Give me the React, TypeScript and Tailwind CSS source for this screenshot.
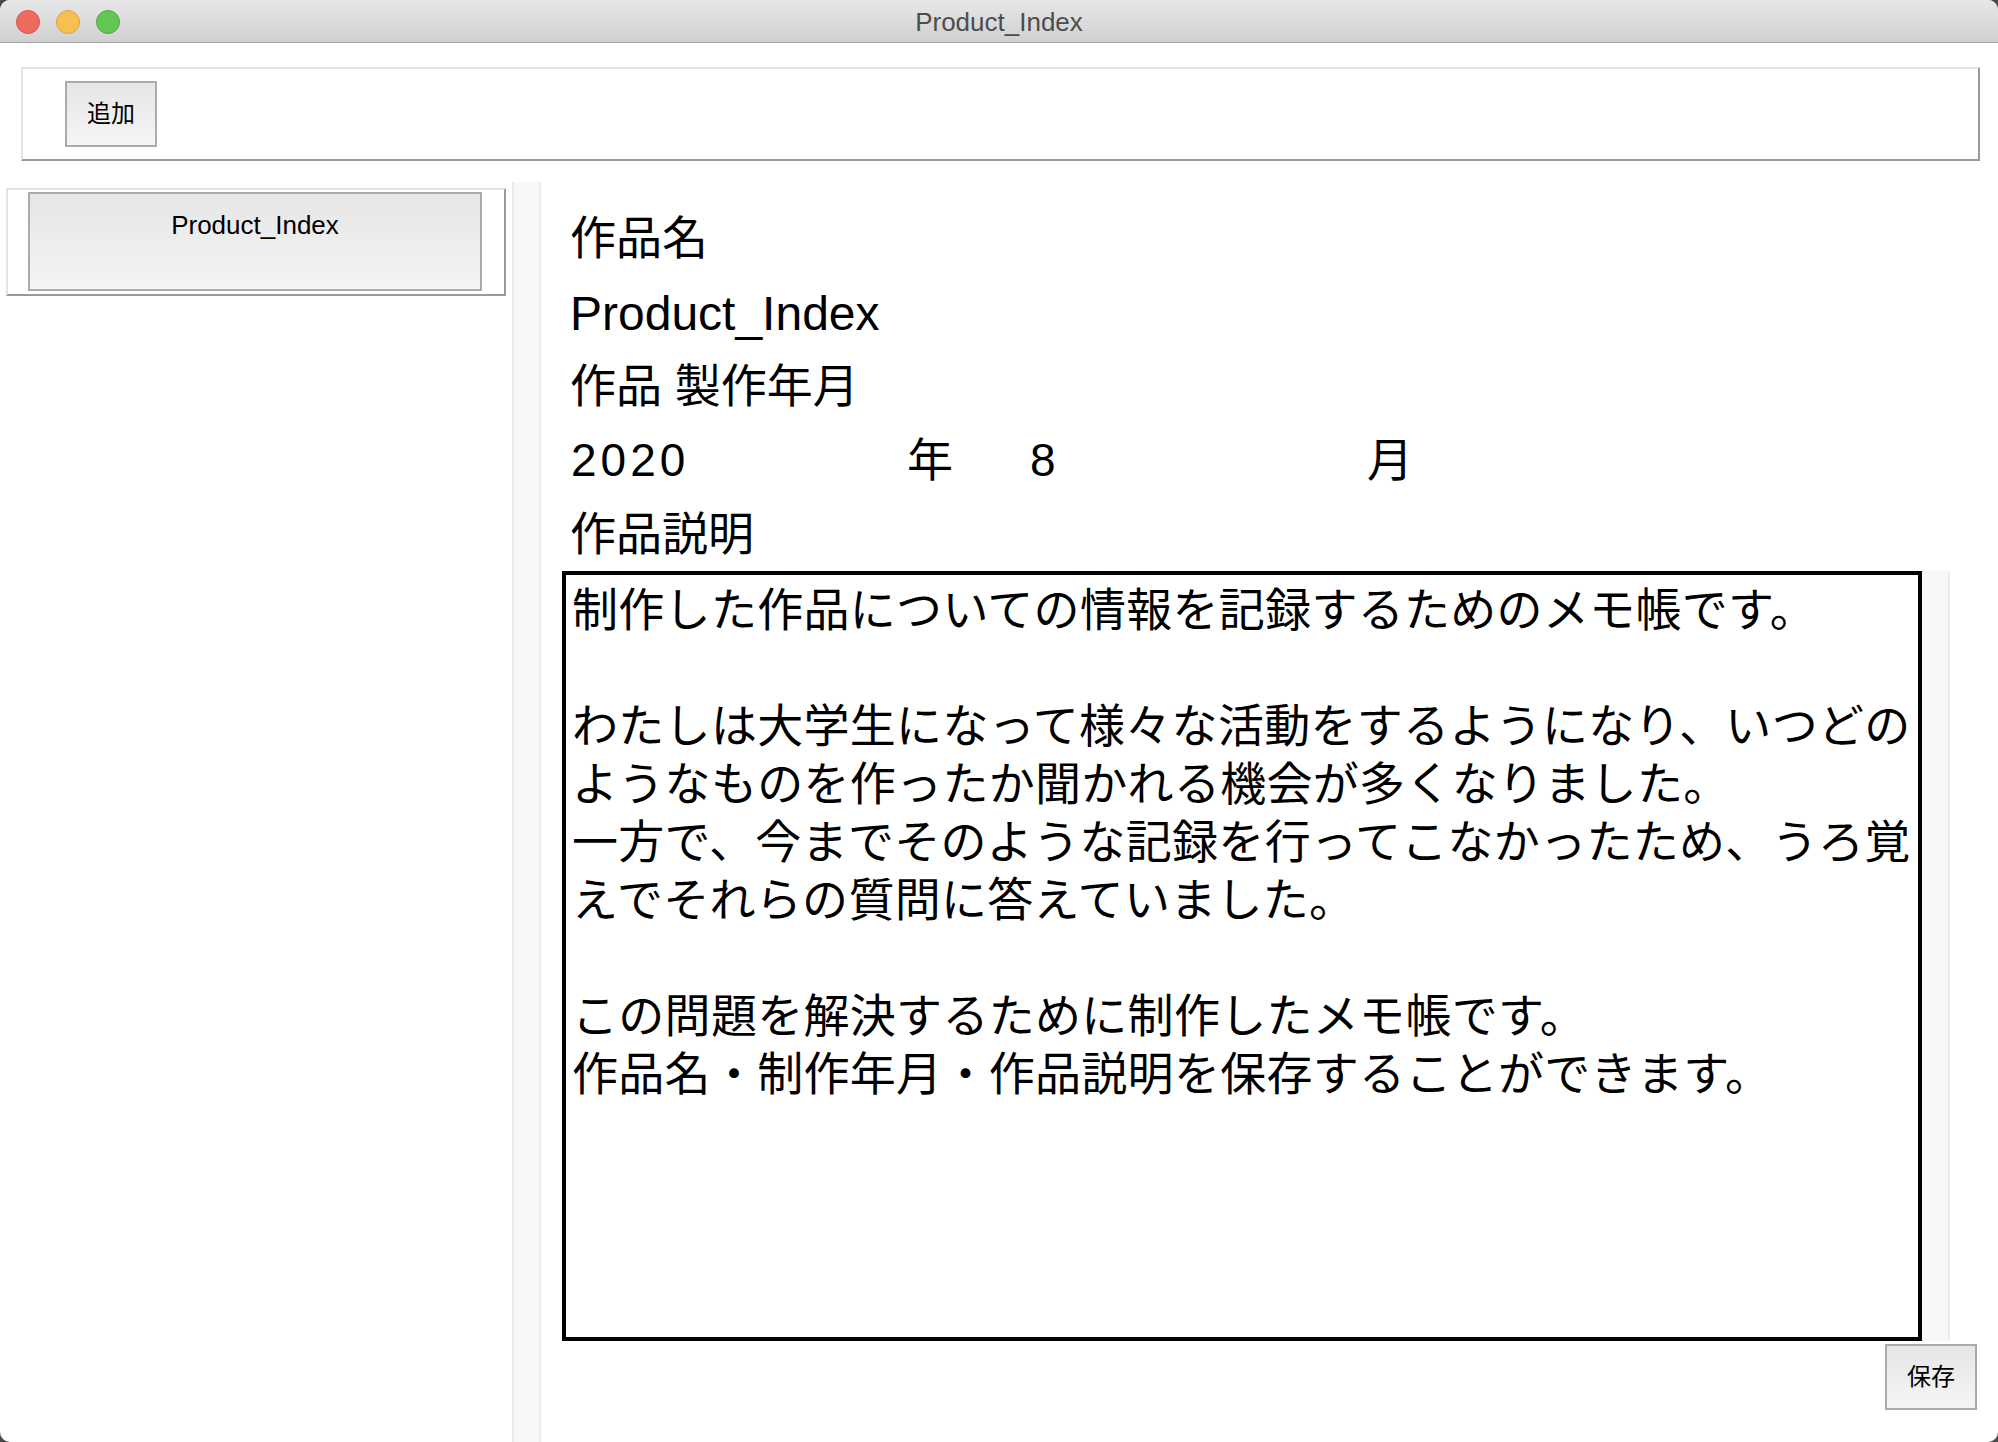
const Light = ({ color, ring }: { color: string; ring: string }) => (
  <div className={`h-[24px] w-[24px] rounded-full border ${color} ${ring}`} />
);

const MacButton = ({ label }: { label: string }) => (
  <button className="flex h-[66px] w-[92px] items-center justify-center border-2 border-[#ababab] bg-gradient-to-b from-[#e6e6e6] to-[#f5f5f5] text-[24px] text-black">
    {label}
  </button>
);

const memo = [
  "制作した作品についての情報を記録するためのメモ帳です。",
  "",
  "わたしは大学生になって様々な活動をするようになり、いつどの",
  "ようなものを作ったか聞かれる機会が多くなりました。",
  "一方で、今までそのような記録を行ってこなかったため、うろ覚",
  "えでそれらの質問に答えていました。",
  "",
  "この問題を解決するために制作したメモ帳です。",
  "作品名・制作年月・作品説明を保存することができます。",
];

export default function App() {
  return (
    <div className="h-[1442px] w-[1998px] bg-[#4a4a4a] font-['Liberation_Sans','Noto_Sans_CJK_JP',sans-serif] text-black">
      <div className="flex h-full flex-col overflow-hidden rounded-[10px] bg-white">
        {/* title bar */}
        <div className="relative flex h-[43px] shrink-0 items-center border-b border-[#a9a9a9] bg-gradient-to-b from-[#e7e7e7] to-[#d0d0d0]">
          <div className="flex gap-[16px] pl-[16px] pt-[1px]">
            <Light color="bg-[#ee6a5f]" ring="border-[#d5574c]" />
            <Light color="bg-[#f5c04f]" ring="border-[#d9a33f]" />
            <Light color="bg-[#62c655]" ring="border-[#4ea944]" />
          </div>
          <div className="absolute inset-0 flex items-center justify-center pt-[3px] text-[26px] text-[#4d4d4d]">
            Product_Index
          </div>
        </div>

        {/* toolbar */}
        <div className="shrink-0 pl-[21px] pr-[18px] pt-[24px]">
          <div className="flex h-[94px] items-center border-2 border-b-[#9a9a9a] border-l-[#e4e4e4] border-r-[#9a9a9a] border-t-[#e4e4e4] pl-[42px]">
            <MacButton label="追加" />
          </div>
        </div>

        {/* main */}
        <div className="flex flex-1 pt-[21px]">
          <div className="w-[512px] shrink-0 px-[6px] pt-[6px]">
            <div className="border-2 border-b-[#9a9a9a] border-l-[#e4e4e4] border-r-[#9a9a9a] border-t-[#e4e4e4] pb-[3px] pl-[20px] pr-[22px] pt-[2px]">
              <div className="h-[99px] border-2 border-[#ababab] bg-gradient-to-b from-[#e6e6e6] to-[#f4f4f4] pt-[16px] text-center text-[26px] leading-[30px]">
                Product_Index
              </div>
            </div>
          </div>

          <div className="w-[29px] shrink-0 border-l-2 border-r-2 border-[#ebebeb] bg-[#f8f8f8]" />

          <div className="flex flex-1 flex-col pl-[21px] pr-[21px] pt-[19px]">
            <div className="h-[74px] pl-[8px] text-[46px] leading-[74px]">作品名</div>
            <div className="h-[74px] pl-[8px] pt-[3px] text-[48px] leading-[71px]">Product_Index</div>
            <div className="h-[74px] pl-[8px] text-[46px] leading-[74px]">作品 製作年月</div>
            <div className="flex h-[74px] text-[46px] leading-[74px]">
              <span className="w-[345px] pl-[9px] tracking-[4px]">2020</span>
              <span className="w-[119px]">年</span>
              <span className="w-[341px] pl-[4px]">8</span>
              <span>月</span>
            </div>
            <div className="h-[74px] pl-[8px] text-[46px] leading-[74px]">作品説明</div>

            <div className="flex">
              <div className="h-[770px] w-[1360px] border-4 border-black px-[6px] pt-[2px] font-['Noto_Sans_CJK_JP',sans-serif] text-[46px] leading-[58px] tracking-[0.3px]">
                {memo.map((line, i) => (
                  <div key={i} className="h-[58px] whitespace-nowrap">
                    {line}
                  </div>
                ))}
              </div>
              <div className="h-[770px] w-[28px] border-r-2 border-[#ececec] bg-[#f7f7f7]" />
            </div>

            <div className="flex justify-end pt-[3px]">
              <MacButton label="保存" />
            </div>
          </div>
        </div>
      </div>
    </div>
  );
}
